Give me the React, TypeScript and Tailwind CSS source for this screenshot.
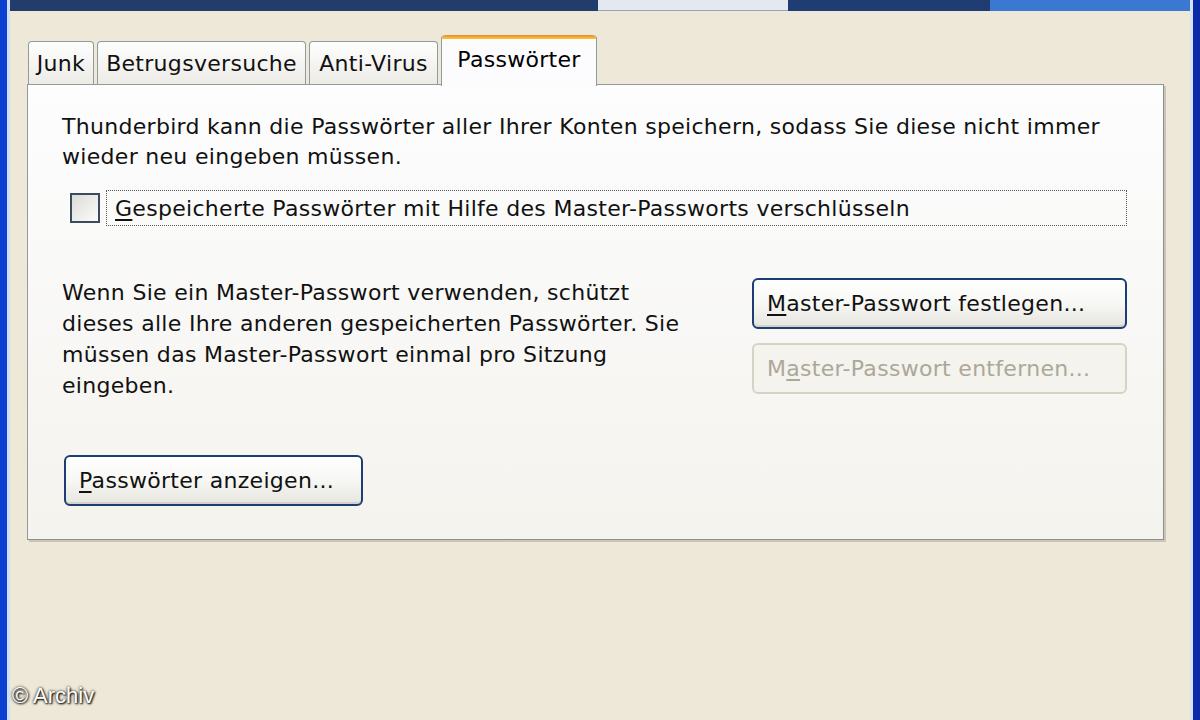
import React from 'react';

// XP-style "Passwörter" settings tab, scaled up
const Tab = ({ label, width, active = false }: { label: string; width: string; active?: boolean }) => {
  if (active) {
    return (
      <div className={`${width} h-[51px] -mb-[2px] relative z-10 flex flex-col rounded-t-[4px] border-x border-[#919b9c] bg-[#fcfcfe]`}>
        <div className="h-[4px] rounded-t-[4px] bg-gradient-to-b from-[#e68b2c] to-[#ffc73c]" />
        <div className="flex-1 flex justify-center pt-[4px] text-[#000]">{label}</div>
      </div>
    );
  }
  return (
    <div className={`${width} h-[43px] flex justify-center pt-[5px] rounded-t-[4px] border border-b-0 border-[#919b9c] bg-gradient-to-b from-[#fefefe] to-[#ecebe6]`}>
      {label}
    </div>
  );
};

const XpButton = ({ children, disabled = false, className = '' }: { children: React.ReactNode; disabled?: boolean; className?: string }) => (
  <div
    className={`h-[51px] flex items-center px-[13px] rounded-[6px] border-2 ${
      disabled
        ? 'border-[#d6d3c6] text-[#aca899] bg-[#f4f3ee]'
        : 'border-[#1c3f73] text-[#111] bg-gradient-to-b from-[#ffffff] via-[#f7f7f4] to-[#e6e5df] shadow-[inset_0_-2px_0_#d4d2c8]'
    } ${className}`}
  >
    {children}
  </div>
);

export default function App() {
  return (
    <div className="w-[1200px] h-[720px] relative overflow-hidden flex bg-[#eee8d8] font-['DejaVu_Sans',sans-serif] text-[22px] tracking-[0.3px] text-[#111]">
      {/* window left edge */}
      <div className="w-[7px] bg-[#0b3fcf]" />
      <div className="w-[3px] bg-[#cfe0f4]" />

      <div className="flex-1 flex flex-col">
        {/* title bar remains */}
        <div className="h-[11px] flex">
          <div className="w-[588px] bg-[#223c6c]" />
          <div className="w-[190px] bg-[#e4e8f0] border-b border-[#9aa4b4]" />
          <div className="w-[202px] bg-[#1f3d72]" />
          <div className="flex-1 bg-[#3a78d2]" />
        </div>

        <div className="pl-[17px] pt-[24px]">
          {/* tabs */}
          <div className="flex items-end gap-[3px] pl-[1px]">
            <Tab label="Junk" width="w-[66px]" />
            <Tab label="Betrugsversuche" width="w-[209px]" />
            <Tab label="Anti-Virus" width="w-[129px]" />
            <Tab label="Passwörter" width="w-[156px]" active />
          </div>

          {/* panel */}
          <div className="w-[1137px] h-[456px] border border-[#919b9c] border-r-[#8a8f90] border-b-[#8a8f90] shadow-[2px_2px_0_#c9c6b6] bg-gradient-to-b from-[#fdfdfe] to-[#f4f3ee] pl-[34px] pr-[36px] pt-[27px]">
            <p className="leading-[30px]">
              Thunderbird kann die Passwörter aller Ihrer Konten speichern, sodass Sie diese nicht immer
              <br />
              wieder neu eingeben müssen.
            </p>

            <div className="mt-[18px] ml-[8px] flex items-center gap-[6px]">
              <div className="w-[30px] h-[30px] border-2 border-[#3b4a5c] bg-gradient-to-br from-[#dcdcd6] to-[#fbfbfa]" />
              <div className="flex-1 h-[36px] flex items-center px-[8px] border border-dotted border-[#555]">
                <span>
                  <span className="underline underline-offset-[3px]">G</span>espeicherte Passwörter mit Hilfe des Master-Passworts verschlüsseln
                </span>
              </div>
            </div>

            <div className="mt-[52px] flex justify-between">
              <p className="leading-[31px] -mt-[1px]">
                Wenn Sie ein Master-Passwort verwenden, schützt
                <br />
                dieses alle Ihre anderen gespeicherten Passwörter. Sie
                <br />
                müssen das Master-Passwort einmal pro Sitzung
                <br />
                eingeben.
              </p>
              <div className="w-[375px] flex flex-col gap-[14px]">
                <XpButton>
                  <span>
                    <span className="underline underline-offset-[3px]">M</span>aster-Passwort festlegen...
                  </span>
                </XpButton>
                <XpButton disabled className="h-[50px]">
                  <span>
                    M<span className="underline underline-offset-[3px]">a</span>ster-Passwort entfernen...
                  </span>
                </XpButton>
              </div>
            </div>

            <XpButton className="mt-[54px] ml-[2px] w-[299px]">
              <span>
                <span className="underline underline-offset-[3px]">P</span>asswörter anzeigen...
              </span>
            </XpButton>
          </div>
        </div>
      </div>

      {/* window right edge */}
      <div className="w-[3px] bg-[#d6e2ee]" />
      <div className="w-[7px] bg-[#0a2aa8]" />

      {/* watermark */}
      <div className="absolute left-[12px] bottom-[8px] font-['Liberation_Sans',sans-serif] text-[22px] tracking-normal text-white [text-shadow:0_0_3px_#000,1px_1px_2px_#000]">
        © Archiv
      </div>
    </div>
  );
}
